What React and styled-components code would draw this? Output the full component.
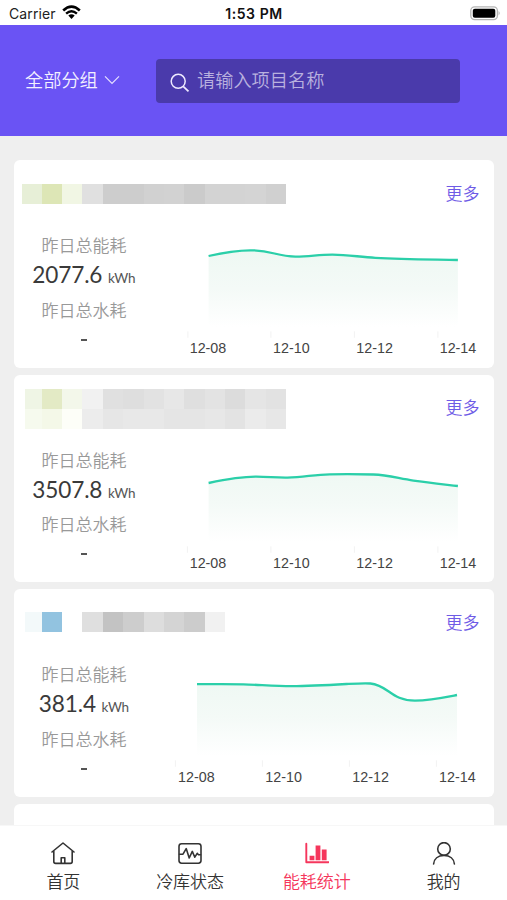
import React from 'react';
import styled, { createGlobalStyle } from 'styled-components';

const GlobalStyle = createGlobalStyle`
    body {
        margin: 0;
        background: #efefef;
        font-family: "Noto Sans CJK SC", sans-serif;
    }

    * {
        box-sizing: border-box;
    }
`;

// rows holds the mosaic colours, left to right
const sites = [
    {
        total: '2077.6',
        rows: [
            ['#e7efd7', '#dde6b6', '#f1f6e4', '#e0e0e0', '#cdcdcd', '#cdcdcd', '#d1d1d1', '#d2d2d2', '#cbcbcb', '#d3d3d3', '#d3d3d3', '#d4d4d4', '#d0d0d0'],
        ],
        inset: 7.4,
        top: 23.5,
        line: 'M194.2 95.2 C208 92 221 89.7 235.9 89.5 C257 89 262 95.8 281 95.8 C296 95.8 303 93.8 318 93.8 C334 93.8 346 96.4 361 97 C389 98.4 416 98.6 443.5 99.2',
        start: 194.2,
        ticks: [173.5, 256.5, 340, 423.5],
        labels: [193.6, 277, 360.2, 443.6],
    },
    {
        total: '3507.8',
        rows: [
            ['#eff5e5', '#e3eac5', '#f3f7ea', '#f1f1f1', '#e0e0e0', '#dedede', '#e2e2e2', '#e7e7e7', '#dfdfdf', '#e3e3e3', '#dcdcdc', '#e5e5e5', '#e2e2e2'],
            ['#f6faee', '#f4f8e8', '#fdfef8', '#ececec', '#e6e6e6', '#e8e8e8', '#e8e8e8', '#e5e5e5', '#e5e5e5', '#e7e7e7', '#e3e3e3', '#ebebeb', '#e7e7e7'],
        ],
        inset: 10.5,
        top: 13.7,
        line: 'M194.2 107.2 C210 103.9 226 100.7 242 100.9 C254 100.9 261 102.1 273 101.9 C290 101.5 300 98.6 315.5 98.5 C330 98.3 344 98.3 359 98.7 C374 99.2 385 102.9 399 104.8 C414 106.9 429 108.5 443.5 110.2',
        start: 194.2,
        ticks: [173, 256.5, 340, 423.5],
        labels: [193.6, 277, 360.2, 443.6],
    },
    {
        total: '381.4',
        rows: [
            ['#f3f9fa', '#92c3e0', '#ffffff', '#dfdfdf', '#c3c3c3', '#cdcdcd', '#dddddd', '#d4d4d4', '#cccccc', '#f1f1f1'],
        ],
        inset: 10.5,
        top: 22.5,
        line: 'M182.6 94.4 C198 94.4 213 94.2 229 94.5 C245 95 261 96.4 277 96.4 C295 96.3 315 95.2 332 94.2 C340 93.8 350 93.2 356 93.7 C374 95.5 377 110.8 400.5 110.8 C415 110.7 428 108 442.6 105.2',
        start: 182.6,
        ticks: [161, 248, 335, 422],
        labels: [182, 269.2, 356.2, 443],
    },
];

const days = ['12-08', '12-10', '12-12', '12-14'];

const Chart = ({ site, id }) => (
    <ChartSvg viewBox="138.6 65.2 340 141" width="340" height="141">
        <defs>
            <linearGradient id={id} gradientUnits="userSpaceOnUse" x1="0" y1="89" x2="0" y2="166">
                <stop offset="0" stopColor="#eef8f3" />
                <stop offset="0.5" stopColor="#f4faf7" />
                <stop offset="1" stopColor="#ffffff" />
            </linearGradient>
        </defs>
        <path d={`${site.line} V169 H${site.start} Z`} fill={`url(#${id})`} />
        <path d={site.line} fill="none" stroke="#2bcfa9" strokeWidth="2.3" />
        {days.map((day, i) => (
            <g key={day}>
                <path d={`M${site.ticks[i]} 170.5 V177`} stroke="#f2f2f2" />
                <AxisText x={site.labels[i]} y="192">{day}</AxisText>
            </g>
        ))}
    </ChartSvg>
);

const SiteCard = ({ site, id }) => (
    <Card>
        <CardHead>
            <Mosaic $inset={site.inset} $top={site.top}>
                {site.rows.map((row, r) => (
                    <MosaicRow key={r}>
                        {row.map((color, c) => (
                            <Pixel key={c} $color={color} $width={c === 0 ? 27.2 - site.inset : 20.4} />
                        ))}
                    </MosaicRow>
                ))}
            </Mosaic>
            <More>更多</More>
        </CardHead>
        <CardBody>
            <Stats>
                <Caption>昨日总能耗</Caption>
                <Total>{site.total} <small>kWh</small></Total>
                <Caption>昨日总水耗</Caption>
                <Dash />
            </Stats>
            <Chart site={site} id={id} />
        </CardBody>
    </Card>
);

const HomeIcon = () => (
    <TabIcon viewBox="0 0 24 24">
        <path d="M1 10 L12 1 L23 10 M2.8 8.8 V19.6 Q2.8 21.4 4.6 21.4 H19.4 Q21.2 21.4 21.2 19.6 V8.8 M10.2 21.2 V15.8 H13.8 V21.2" />
    </TabIcon>
);

const StateIcon = () => (
    <TabIcon viewBox="0 0 24 24">
        <rect x="1" y="1.8" width="22" height="19.4" rx="2.6" />
        <path d="M1.5 12.2 H5 L8.2 6.6 L11.2 16 L14.3 9.4 L16.8 15.2 L19.2 11.3 L20.5 12.8 H22.5" />
    </TabIcon>
);

const ChartIcon = () => (
    <TabIcon viewBox="0 0 24 24">
        <path d="M1.3 1.8 V20.2 H23.5" strokeWidth="1.9" />
        <path d="M7 13.8 V18.2 M13 3.4 V18.2 M19.2 7.6 V18.2" strokeWidth="4.8" strokeLinecap="butt" />
    </TabIcon>
);

const MeIcon = () => (
    <TabIcon viewBox="0 0 24 24">
        <circle cx="12" cy="6.9" r="6.3" />
        <path d="M1.6 22 C2 16.8 6 13.4 12 13.4 C18 13.4 22 16.8 22.4 22" />
    </TabIcon>
);

const App = () => (
    <Screen>
        <GlobalStyle />
        <StatusBar>
            <Carrier>
                Carrier
                <svg width="19" height="15" viewBox="0 0 19 15">
                    <path d="M1.2 5.5 Q9.5 -2.2 17.8 5.5" fill="none" stroke="#000" strokeWidth="2.6" />
                    <path d="M4.1 8.6 Q9.5 3.7 14.9 8.6" fill="none" stroke="#000" strokeWidth="2.4" />
                    <path d="M6.3 10.6 Q9.5 8 12.7 10.6 L9.5 13.9 Z" fill="#000" />
                </svg>
            </Carrier>
            <Clock>1:53 PM</Clock>
            <Battery>
                <svg width="31" height="15" viewBox="0 0 31 15">
                    <rect x=".8" y=".8" width="26.6" height="12.8" rx="3.8" fill="#fff" stroke="#b5b5b5" strokeWidth="1.3" />
                    <rect x="2.8" y="2.7" width="22.5" height="9" rx="2" fill="#000" />
                    <path d="M28.6 5 Q30.6 7.2 28.6 9.4 Z" fill="#aaa" />
                </svg>
            </Battery>
        </StatusBar>
        <Header>
            <Group>
                全部分组
                <svg width="16" height="10" viewBox="0 0 16 10">
                    <path d="M1 1.3 L8 8.3 L15 1.3" fill="none" stroke="#e5e0ff" strokeWidth="1.2" />
                </svg>
            </Group>
            <Search>
                <svg width="20" height="20" viewBox="0 0 20 20">
                    <circle cx="8.2" cy="8.3" r="7" fill="none" stroke="#eeeaff" strokeWidth="1.5" />
                    <path d="M13.2 13.4 L18.5 18.4" stroke="#eeeaff" strokeWidth="1.8" />
                </svg>
                <span>请输入项目名称</span>
            </Search>
        </Header>
        <List>
            {sites.map((site, i) => <SiteCard key={site.total} site={site} id={`area${i}`} />)}
            <Card />
        </List>
        <TabBar>
            <Tab><HomeIcon />首页</Tab>
            <Tab><StateIcon />冷库状态</Tab>
            <Tab $active><ChartIcon />能耗统计</Tab>
            <Tab><MeIcon />我的</Tab>
        </TabBar>
    </Screen>
);

const Screen = styled.div`
    display: flex;
    flex-direction: column;
    width: 507px;
    height: 900px;
    overflow: hidden;
`;

const StatusBar = styled.div`
    display: grid;
    grid-template-columns: 1fr auto 1fr;
    align-items: center;
    flex: none;
    height: 25.4px;
    padding: 2px 7px 0 9px;
    background: #fff;
    color: #222;
    font: 14px/20px Inter, sans-serif;
`;

const Carrier = styled.div`
    display: flex;
    align-items: center;
    gap: 6px;
    letter-spacing: 0.1px;

    svg {
        margin-top: -2px;
    }
`;

const Clock = styled.div`
    color: #111;
    font-weight: 600;
    letter-spacing: 0.55px;
    margin-right: 1px;
`;

const Battery = styled.div`
    display: flex;
    justify-content: flex-end;
    margin-top: -1px;
    margin-right: -1px;
`;

const Header = styled.header`
    display: flex;
    align-items: center;
    flex: none;
    height: 111px;
    padding-left: 25px;
    background: #6a53f4;
`;

const Group = styled.div`
    display: flex;
    align-items: center;
    gap: 6px;
    width: 131px;
    margin-top: -3px;
    color: #f3f0ff;
    font-size: 18.2px;
    font-weight: 350;
    line-height: 26px;

    svg {
        margin-top: 2px;
    }
`;

const Search = styled.div`
    display: flex;
    align-items: center;
    width: 304px;
    height: 43.5px;
    padding-left: 13.5px;
    gap: 7.5px;
    border-radius: 4px;
    background: #4a3aab;
    color: #b9b1df;
    font-size: 18.2px;
    font-weight: 350;
    line-height: 26px;

    svg {
        margin-top: 5px;
    }

    span {
        margin-top: -3px;
    }
`;

const List = styled.main`
    display: flex;
    flex-direction: column;
    gap: 7px;
    flex: 1;
    min-height: 0;
    padding: 24px 13.5px 0 14.4px;
    overflow: hidden;
`;

const Card = styled.section`
    flex: none;
    height: 207.5px;
    border-radius: 6px;
    background: #fff;
`;

const CardHead = styled.div`
    display: flex;
    justify-content: space-between;
    height: 66px;
`;

const Mosaic = styled.div`
    padding: ${(p) => p.$top}px 0 0 ${(p) => p.$inset}px;
`;

const MosaicRow = styled.div`
    display: flex;
`;

const Pixel = styled.span`
    width: ${(p) => p.$width}px;
    height: 20.2px;
    background: ${(p) => p.$color};
`;

const More = styled.span`
    margin: 19.3px 14px 0 0;
    color: #6e5be6;
    font-size: 17px;
    font-weight: 350;
    line-height: 25px;
`;

const CardBody = styled.div`
    display: flex;
`;

const Stats = styled.div`
    display: flex;
    flex-direction: column;
    align-items: center;
    width: 139px;
    padding-top: 6px;
`;

const Caption = styled.div`
    color: #999;
    font-size: 17px;
    font-weight: 350;
    line-height: 25px;
`;

const Total = styled.div`
    height: 39.2px;
    color: #3a3a3a;
    font: 22.6px/35px Lato, sans-serif;
    letter-spacing: -0.15px;
    white-space: nowrap;

    small {
        color: #555;
        font-size: 13.5px;
        letter-spacing: -0.2px;
    }
`;

const Dash = styled.div`
    width: 6px;
    height: 2px;
    margin-top: 17.3px;
    background: #555;
`;

const ChartSvg = styled.svg`
    flex: none;
`;

const AxisText = styled.text`
    fill: #444;
    font-family: "Liberation Sans", Arial, sans-serif;
    font-size: 14.3px;
    text-anchor: middle;
`;

const TabBar = styled.nav`
    display: grid;
    grid-template-columns: repeat(4, 1fr);
    flex: none;
    height: 75px;
    border-top: 1px solid #f7f7f7;
    background: #fff;
`;

const Tab = styled.div`
    display: flex;
    flex-direction: column;
    align-items: center;
    padding-top: 16px;
    color: ${(p) => (p.$active ? '#f5365c' : '#333')};
    font-size: 17px;
    font-weight: 350;
    line-height: 25px;
`;

const TabIcon = styled.svg`
    width: 24px;
    height: 24px;
    margin-bottom: 1.5px;
    fill: none;
    stroke: currentColor;
    stroke-width: 1.6;
    stroke-linecap: round;
    stroke-linejoin: round;
`;

export default App;
